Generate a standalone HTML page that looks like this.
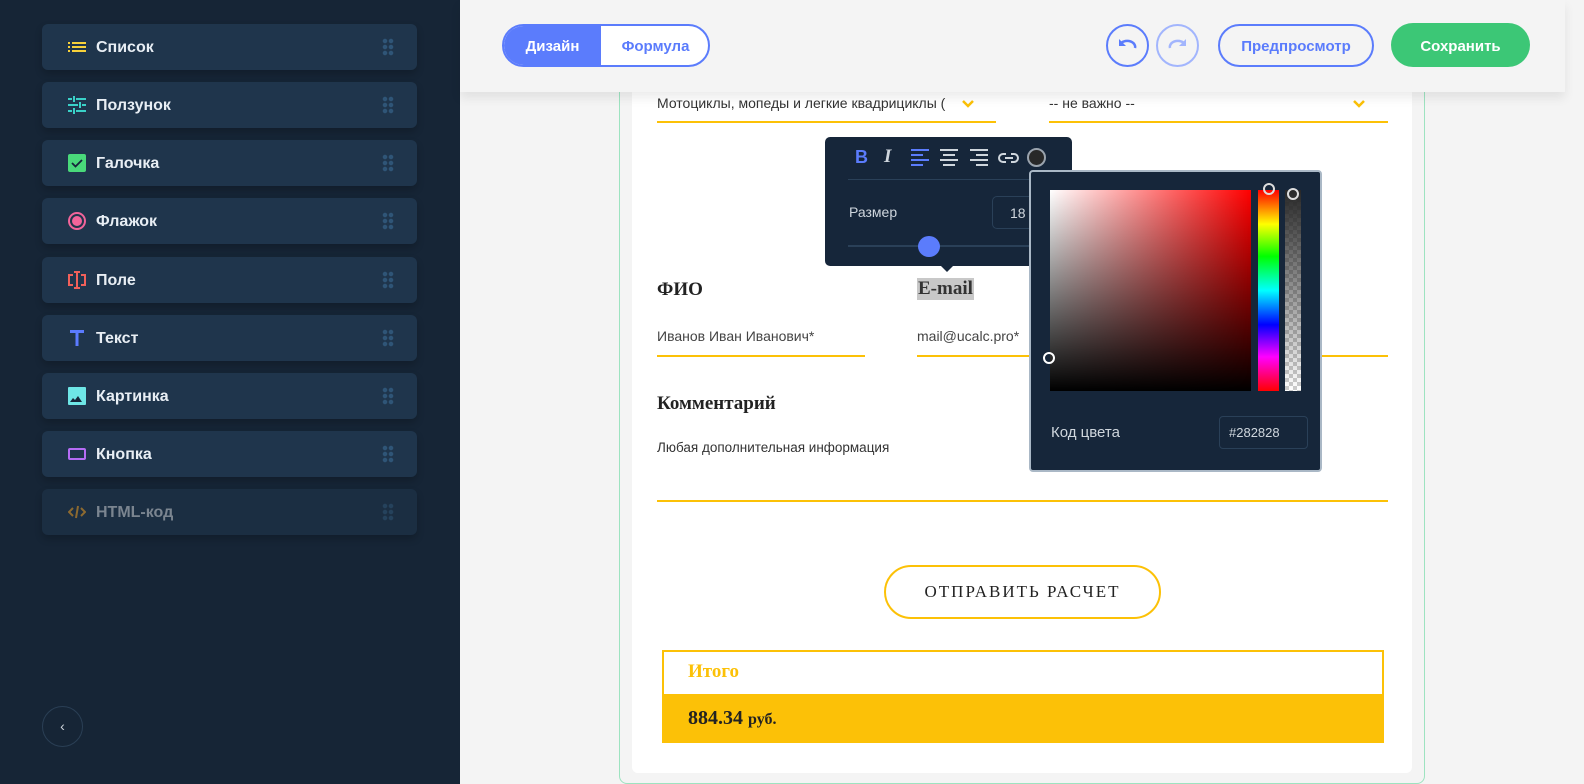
<!DOCTYPE html>
<html><head><meta charset="utf-8"><style>
*{box-sizing:border-box;margin:0;padding:0}
body{width:1584px;height:784px;overflow:hidden;background:#f4f4f4;font-family:"Liberation Sans",sans-serif;position:relative}
.sb{position:absolute;left:0;top:0;width:460px;height:784px;background:#162536}
.it{position:absolute;left:42px;width:375px;height:46px;background:#1f354c;border-radius:6px;box-shadow:0 4px 8px rgba(0,0,0,.2);color:#e8eef4;font-size:16px;font-weight:bold}
.it .ic{position:absolute;left:26px;top:14px;width:18px;height:18px}
.it span{position:absolute;left:54px;top:15px}
.it .dr{position:absolute;left:340px;top:14px;width:12px;height:18px;background:radial-gradient(circle,#2f5577 2px,transparent 2.5px) 0 0/6px 6px}
.hd{position:absolute;left:460px;top:0;width:1105px;height:92px;background:#f4f4f4;box-shadow:0 6px 10px rgba(0,0,0,.08);z-index:5}
.card{position:absolute;left:619px;top:60px;width:806px;height:724px;border:1.5px solid #9de3c0;border-radius:8px}
.wc{position:absolute;left:632px;top:80px;width:780px;height:693px;background:#fff;border-radius:6px}
.ab{position:absolute}
.line{position:absolute;height:2px;background:#fcc107}
.ser{font-family:"Liberation Serif",serif}
</style></head><body>
<div class="sb">
 <div class="it" style="top:24px"><svg class="ic" viewBox="0 0 18 18"><rect x="0" y="4" width="2" height="2" fill="#f7d13a"/><rect x="4" y="4" width="14" height="2" fill="#f7d13a"/><rect x="0" y="8" width="2" height="2" fill="#f7d13a"/><rect x="4" y="8" width="14" height="2" fill="#f7d13a"/><rect x="0" y="12" width="2" height="2" fill="#f7d13a"/><rect x="4" y="12" width="14" height="2" fill="#f7d13a"/></svg><span>Список</span><i class="dr"></i></div>
 <div class="it" style="top:82px"><svg class="ic" viewBox="0 0 18 18" fill="#3ad1c8"><rect x="0" y="2" width="4" height="2"/><rect x="8" y="2" width="10" height="2"/><rect x="5" y="0" width="2" height="6"/><rect x="0" y="8" width="10" height="2"/><rect x="14" y="8" width="4" height="2"/><rect x="11" y="6" width="2" height="6"/><rect x="0" y="14" width="4" height="2"/><rect x="8" y="14" width="10" height="2"/><rect x="5" y="12" width="2" height="6"/></svg><span>Ползунок</span><i class="dr"></i></div>
 <div class="it" style="top:140px"><svg class="ic" viewBox="0 0 18 18"><rect width="18" height="18" rx="2" fill="#49d97a"/><path d="M4 9l3.5 3.5L14 6" stroke="#16263a" stroke-width="1.8" fill="none"/></svg><span>Галочка</span><i class="dr"></i></div>
 <div class="it" style="top:198px"><svg class="ic" viewBox="0 0 18 18"><circle cx="9" cy="9" r="8" stroke="#f2649a" stroke-width="2" fill="none"/><circle cx="9" cy="9" r="5" fill="#f2649a"/></svg><span>Флажок</span><i class="dr"></i></div>
 <div class="it" style="top:257px"><svg class="ic" viewBox="0 0 18 18" fill="none" stroke="#f0605a" stroke-width="2"><path d="M5 4H1v10h4M13 4h4v10h-4M9 1v16M6 1h6M6 17h6"/></svg><span>Поле</span><i class="dr"></i></div>
 <div class="it" style="top:315px"><svg class="ic" viewBox="0 0 18 18" fill="#5b7bff"><rect x="2" y="1" width="14" height="3"/><rect x="7.5" y="1" width="3" height="16"/></svg><span>Текст</span><i class="dr"></i></div>
 <div class="it" style="top:373px"><svg class="ic" viewBox="0 0 18 18"><rect width="18" height="18" rx="1" fill="#6ee6e6"/><path d="M2 15l3-4 2 2 3-4 4 6z" fill="#16263a"/></svg><span>Картинка</span><i class="dr"></i></div>
 <div class="it" style="top:431px"><svg class="ic" viewBox="0 0 18 18"><rect x="1" y="4" width="16" height="10" rx="1" stroke="#b56cf5" stroke-width="2" fill="none"/></svg><span>Кнопка</span><i class="dr"></i></div>
 <div class="it" style="top:489px;background:#1b2e42;color:#7b8590"><svg class="ic" viewBox="0 0 18 18" fill="none" stroke="#8d6a30" stroke-width="2"><path d="M5 5L1 9l4 4M13 5l4 4-4 4M10 3l-2 12"/></svg><span>HTML-код</span><i class="dr" style="opacity:.5"></i></div>
 <div class="ab" style="left:42px;top:706px;width:41px;height:41px;border:1.5px solid #2a3f55;border-radius:50%;color:#cfd6dd;font-size:14px;text-align:center;line-height:38px">‹</div>
</div>
<div class="hd">
 <div class="ab" style="left:42px;top:24px;width:208px;height:43px;border:2px solid #5b7cfc;border-radius:22px;overflow:hidden;background:#fff">
  <div class="ab" style="left:0;top:0;width:97px;height:41px;background:#5b7cfc;color:#fff;font-weight:bold;font-size:15px;text-align:center;line-height:42px">Дизайн</div>
  <div class="ab" style="left:97px;top:0;width:109px;height:41px;color:#5b7cfc;font-weight:bold;font-size:15px;text-align:center;line-height:42px">Формула</div>
 </div>
 <div class="ab" style="left:646px;top:24px;width:43px;height:43px;border:2px solid #5b7cfc;border-radius:50%"><svg width="39" height="39" viewBox="0 0 39 39"><path d="M13 17a8 6 0 0 1 14 5" stroke="#5b7cfc" stroke-width="2.5" fill="none"/><path d="M11 13v7h7z" fill="#5b7cfc"/></svg></div>
 <div class="ab" style="left:696px;top:24px;width:43px;height:43px;border:2px solid #a2b5fd;border-radius:50%"><svg width="39" height="39" viewBox="0 0 39 39"><path d="M26 17a8 6 0 0 0 -14 5" stroke="#a2b5fd" stroke-width="2.5" fill="none"/><path d="M28 13v7h-7z" fill="#a2b5fd"/></svg></div>
 <div class="ab" style="left:758px;top:24px;width:156px;height:43px;border:2px solid #5b7cfc;border-radius:22px;color:#5b7cfc;font-weight:bold;font-size:15px;text-align:center;line-height:41px">Предпросмотр</div>
 <div class="ab" style="left:931px;top:23px;width:139px;height:44px;background:#3cc776;border-radius:22px;color:#fff;font-weight:bold;font-size:15px;text-align:center;line-height:47px">Сохранить</div>
</div>
<div class="card"></div>
<div class="wc"></div>
<div class="ab" style="left:657px;top:95px;font-size:14px;color:#333">Мотоциклы, мопеды и легкие квадрициклы (</div>
<svg class="ab" style="left:961px;top:99px" width="14" height="10" viewBox="0 0 14 10"><path d="M2 2l5 5 5-5" stroke="#fcc107" stroke-width="2.5" fill="none"/></svg>
<div class="line" style="left:657px;top:121px;width:339px"></div>
<div class="ab" style="left:1049px;top:95px;font-size:14px;color:#333">-- не важно --</div>
<svg class="ab" style="left:1352px;top:99px" width="14" height="10" viewBox="0 0 14 10"><path d="M2 2l5 5 5-5" stroke="#fcc107" stroke-width="2.5" fill="none"/></svg>
<div class="line" style="left:1049px;top:121px;width:339px"></div>
<div class="ab ser" style="left:657px;top:279px;font-size:19px;font-weight:bold;color:#222">ФИО</div>
<div class="ab ser" style="left:917px;top:278px;font-size:19px;font-weight:bold;color:#333;background:#c8c8c8;padding:0 1px">E-mail</div>
<div class="ab" style="left:657px;top:328px;font-size:14px;color:#444">Иванов Иван Иванович*</div>
<div class="line" style="left:657px;top:355px;width:208px"></div>
<div class="ab" style="left:917px;top:328px;font-size:14px;color:#444">mail@ucalc.pro*</div>
<div class="line" style="left:917px;top:355px;width:471px"></div>
<div class="ab ser" style="left:657px;top:393px;font-size:19px;font-weight:bold;color:#222">Комментарий</div>
<div class="ab" style="left:657px;top:440px;font-size:13.5px;color:#333">Любая дополнительная информация</div>
<div class="line" style="left:657px;top:500px;width:731px"></div>
<div class="ab ser" style="left:884px;top:565px;width:277px;height:54px;border:2px solid #fcc107;border-radius:27px;text-align:center;line-height:50px;font-size:17px;letter-spacing:2px;color:#222">ОТПРАВИТЬ РАСЧЕТ</div>
<div class="ab" style="left:662px;top:650px;width:722px;height:93px;border:2px solid #fcc107;background:#fcc107">
 <div class="ab ser" style="left:0;top:0;width:718px;height:42px;background:#fff;color:#fcc107;font-size:19px;font-weight:bold;padding:9px 0 0 24px">Итого</div>
 <div class="ab ser" style="left:24px;top:55px;font-size:20px;font-weight:bold;color:#222">884.34 <span style="font-size:16px">руб.</span></div>
</div>
<div class="ab" style="left:825px;top:137px;width:247px;height:129px;background:#16263a;border-radius:5px">
 <div class="ab" style="left:30px;top:10px;font-size:18px;font-weight:bold;color:#5b7cfc">B</div>
 <div class="ab ser" style="left:59px;top:9px;font-size:19px;font-weight:bold;font-style:italic;color:#cfd6dd">I</div>
 <svg class="ab" style="left:86px;top:12px" width="20" height="18"><g fill="#5b7cfc"><rect y="0" width="18" height="2"/><rect y="5" width="12" height="2"/><rect y="10" width="18" height="2"/><rect y="15" width="12" height="2"/></g></svg>
 <svg class="ab" style="left:115px;top:12px" width="20" height="18"><g fill="#cfd6dd"><rect y="0" width="18" height="2"/><rect x="3" y="5" width="12" height="2"/><rect y="10" width="18" height="2"/><rect x="3" y="15" width="12" height="2"/></g></svg>
 <svg class="ab" style="left:145px;top:12px" width="20" height="18"><g fill="#cfd6dd"><rect y="0" width="18" height="2"/><rect x="6" y="5" width="12" height="2"/><rect y="10" width="18" height="2"/><rect x="6" y="15" width="12" height="2"/></g></svg>
 <svg class="ab" style="left:173px;top:14px" width="22" height="14" viewBox="0 0 22 14"><path d="M8 3H5a4 4 0 0 0 0 8h3M13 3h3a4 4 0 0 1 0 8h-3M7 7h8" stroke="#cfd6dd" stroke-width="2" fill="none"/></svg>
 <div class="ab" style="left:202px;top:11px;width:19px;height:19px;border-radius:50%;background:#282828;border:2px solid #9aa3ad"></div>
 <div class="ab" style="left:23px;top:42px;width:200px;height:1px;background:#2a4058"></div>
 <div class="ab" style="left:24px;top:67px;font-size:14px;color:#cfd6dd">Размер</div>
 <div class="ab" style="left:167px;top:59px;width:60px;height:33px;border:1.5px solid #2a4058;border-radius:5px;color:#cfd6dd;font-size:14px;padding:8px 0 0 17px">18</div>
 <div class="ab" style="left:23px;top:108px;width:200px;height:2px;background:#2a4058"></div>
 <div class="ab" style="left:93px;top:99px;width:22px;height:21px;border-radius:50%;background:#5b7cfc"></div>
 <div class="ab" style="left:116px;top:129px;border:6px solid transparent;border-top-color:#16263a"></div>
</div>
<div class="ab" style="left:1029px;top:170px;width:293px;height:302px;background:#16263a;border:2px solid #aab8c6;border-radius:4px">
 <div class="ab" style="left:19px;top:18px;width:201px;height:201px;background:linear-gradient(to bottom,rgba(0,0,0,0),#000),linear-gradient(to right,#fff,#f00)"></div>
 <div class="ab" style="left:12px;top:180px;width:12px;height:12px;border-radius:50%;border:2px solid #fff"></div>
 <div class="ab" style="left:227px;top:18px;width:21px;height:201px;background:linear-gradient(#f00,#ff0 17%,#0f0 33%,#0ff 50%,#00f 67%,#f0f 83%,#f00)"></div>
 <div class="ab" style="left:232px;top:11px;width:12px;height:12px;border-radius:50%;border:2px solid #ddd"></div>
 <div class="ab" style="left:254px;top:18px;width:16px;height:201px;background:linear-gradient(#282828,rgba(40,40,40,0)),repeating-conic-gradient(#ccc 0 25%,#fff 0 50%) 0 0/8px 8px"></div>
 <div class="ab" style="left:256px;top:16px;width:12px;height:12px;border-radius:50%;border:2px solid #ddd"></div>
 <div class="ab" style="left:20px;top:252px;font-size:15px;color:#cfd6dd">Код цвета</div>
 <div class="ab" style="left:188px;top:244px;width:89px;height:33px;border:1.5px solid #2a4058;border-radius:4px;color:#cfd6dd;font-size:13px;padding:8px 0 0 9px">#282828</div>
</div>
</body></html>
